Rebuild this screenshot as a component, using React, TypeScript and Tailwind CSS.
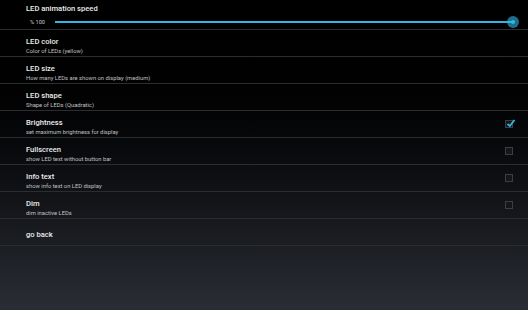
import React from "react";

type Pref = { title: string; summary?: string; check?: boolean; checked?: boolean };

const prefs: Pref[] = [
  { title: "LED color", summary: "Color of LEDs (yellow)" },
  { title: "LED size", summary: "How many LEDs are shown on display (medium)" },
  { title: "LED shape", summary: "Shape of LEDs (Quadratic)" },
  { title: "Brightness", summary: "set maximum brightness for display", check: true, checked: true },
  { title: "Fullscreen", summary: "show LED text without button bar", check: true },
  { title: "Info text", summary: "show info text on LED display", check: true },
  { title: "Dim", summary: "dim inactive LEDs", check: true },
  { title: "go back" },
];

const CheckBox: React.FC<{ checked?: boolean }> = ({ checked }) => (
  <div className="relative w-[8px] h-[8px] border border-[#3c3f42] bg-[#141618]">
    {checked && (
      <svg className="absolute -top-[3px] left-0" width="10" height="10" viewBox="0 0 10 10">
        <path d="M1.5 6 L3.8 8 L8.5 2" fill="none" stroke="#33b5e5" strokeWidth="1.8" />
      </svg>
    )}
  </div>
);

export default function App() {
  return (
    <div
      className="w-[528px] h-[310px] overflow-hidden bg-gradient-to-b from-[#000000] to-[#2a2d34]"
      style={{ fontFamily: "Roboto, 'Liberation Sans', sans-serif" }}
    >
      <div className="h-[30px] border-b border-[#2b2d30] bg-black pl-[26px] pr-[15px]">
        <div className="pt-[3px] text-[7.6px] font-medium text-[#ececec] leading-[12px]">LED animation speed</div>
        <div className="flex items-center mt-[3px]">
          <span className="w-[29px] pl-[4px] text-[5.6px] text-[#c8c8c8]">% 100</span>
          <div className="relative flex-1 h-[2px] bg-[#33b5e5]">
            <div className="absolute -right-[6px] -top-[5px] w-[12px] h-[12px] rounded-full bg-[#33b5e5]/60 flex items-center justify-center">
              <div className="w-[4px] h-[4px] rounded-full bg-[#33b5e5]" />
            </div>
          </div>
        </div>
      </div>
      {prefs.map((p) => (
        <div
          key={p.title}
          className="h-[27px] border-b border-[#2b2e31] flex items-center pl-[26px] pr-[15px]"
        >
          <div className="flex-1 pt-[5px]">
            <div className="text-[7.6px] font-medium text-[#ececec] leading-[10px]">{p.title}</div>
            {p.summary && (
              <div className="text-[5.8px] text-[#c0c0c0] leading-[8px]">{p.summary}</div>
            )}
          </div>
          {p.check && <CheckBox checked={p.checked} />}
        </div>
      ))}
    </div>
  );
}
